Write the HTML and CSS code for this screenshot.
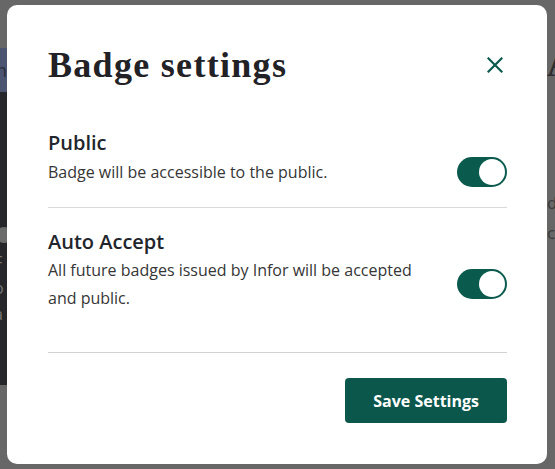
FILE: index.html
```html
<!DOCTYPE html>
<html lang="en">
<head>
<meta charset="utf-8">
<title>Badge settings</title>
<link rel="stylesheet" href="styles.css">
</head>
<body>
<div class="page">
  <div class="side-left">
    <div class="side-band">n</div>
    <div class="side-dark">
      <span class="side-dot"></span>
      <span class="side-text">F<br>o<br>a</span>
    </div>
  </div>
  <div class="side-right">
    <div class="side-big">A</div>
    <div class="side-small">d<br>c</div>
  </div>
</div>

<div class="modal" role="dialog" aria-labelledby="modal-title">
  <header class="modal-header">
    <h1 class="modal-title" id="modal-title">Badge settings</h1>
    <button class="close-btn" aria-label="Close">
      <svg width="16" height="16" viewBox="0 0 16 16" aria-hidden="true">
        <path d="M1.5 1.5 L14.5 14.5 M14.5 1.5 L1.5 14.5" stroke="currentColor" stroke-width="2.2" stroke-linecap="square" fill="none"/>
      </svg>
    </button>
  </header>

  <div class="settings">
    <section class="setting">
      <h2 class="setting-name">Public</h2>
      <div class="setting-row">
        <p class="setting-desc">Badge will be accessible to the public.</p>
        <span class="toggle is-on" role="switch" aria-checked="true"><span class="knob"></span></span>
      </div>
    </section>
    <section class="setting">
      <h2 class="setting-name">Auto Accept</h2>
      <div class="setting-row">
        <p class="setting-desc">All future badges issued by Infor will be accepted and public.</p>
        <span class="toggle is-on" role="switch" aria-checked="true"><span class="knob"></span></span>
      </div>
    </section>
  </div>

  <footer class="modal-footer">
    <button class="save-btn">Save Settings</button>
  </footer>
</div>
</body>
</html>
```

FILE: styles.css
```css
* { box-sizing: border-box; }

html, body {
  margin: 0;
  padding: 0;
}

body {
  width: 555px;
  height: 469px;
  overflow: hidden;
  background: #676767;
  font-family: "Open Sans", "Liberation Sans", sans-serif;
}

.page {
  display: flex;
  justify-content: space-between;
  height: 469px;
}

.side-left {
  width: 8px;
  padding-top: 48px;
  overflow: hidden;
}

.side-band {
  height: 44px;
  background: #4b5470;
  color: #2a2f40;
  font-size: 18px;
  line-height: 44px;
  margin-left: -4px;
  padding-left: 0;
}

.side-dark {
  height: 293px;
  background: #26272b;
  padding-top: 135px;
  display: flex;
  flex-direction: column;
  color: #777;
}

.side-dot {
  display: block;
  width: 16px;
  height: 16px;
  border-radius: 50%;
  background: #6b6b6b;
  margin-left: -4px;
}

.side-text {
  font-size: 16px;
  line-height: 26px;
  margin-left: -6px;
  margin-top: 6px;
}

.side-right {
  width: 8px;
  padding-top: 44px;
  overflow: hidden;
}

.side-big {
  font-family: "Liberation Serif", serif;
  font-weight: 700;
  font-size: 37px;
  line-height: 40px;
  color: #2e2e2e;
}

.side-small {
  margin-top: 104px;
  font-size: 17px;
  line-height: 30px;
  color: #3a3a3a;
}

.modal {
  position: absolute;
  left: 7px;
  top: 5px;
  width: 540px;
  height: 459px;
  background: #fff;
  border-radius: 10px;
  padding: 40px 40px 41px 41px;
  display: flex;
  flex-direction: column;
}

.modal-header {
  display: flex;
  align-items: center;
  justify-content: space-between;
  margin-bottom: 24px;
}

.modal-title {
  margin: 0;
  font-family: "Liberation Serif", serif;
  font-weight: 700;
  font-size: 36px;
  line-height: 40px;
  letter-spacing: 1.3px;
  color: #222226;
}

.close-btn {
  width: 24px;
  height: 24px;
  padding: 0;
  border: 0;
  background: none;
  color: #0b5a4e;
  display: flex;
  align-items: center;
  justify-content: center;
}

.settings {
  border-bottom: 1px solid #d2d2d2;
  padding-bottom: 40px;
}

.setting {
  padding-top: 20px;
}

.setting:first-child {
  padding-bottom: 20px;
  border-bottom: 1px solid #d9d9d9;
}

.setting-name {
  margin: 0;
  font-size: 20px;
  line-height: 28px;
  font-weight: 600;
  color: #22262c;
}

.setting-row {
  display: flex;
  align-items: center;
  gap: 24px;
}

.setting-desc {
  flex: 1;
  margin: 0;
  font-size: 16px;
  line-height: 28px;
  color: #363636;
}

.toggle {
  flex: none;
  width: 50px;
  height: 30px;
  border-radius: 15px;
  background: #0b5a4e;
  display: flex;
  align-items: center;
  justify-content: flex-end;
  padding: 2px;
}

.knob {
  width: 26px;
  height: 26px;
  border-radius: 50%;
  background: #fff;
}

.modal-footer {
  margin-top: auto;
  display: flex;
  justify-content: flex-end;
}

.save-btn {
  height: 45px;
  padding: 0 28px;
  border: 0;
  border-radius: 4px;
  background: #0b574c;
  color: #fff;
  font-family: "Open Sans", "Liberation Sans", sans-serif;
  font-weight: 700;
  font-size: 16px;
}
```
